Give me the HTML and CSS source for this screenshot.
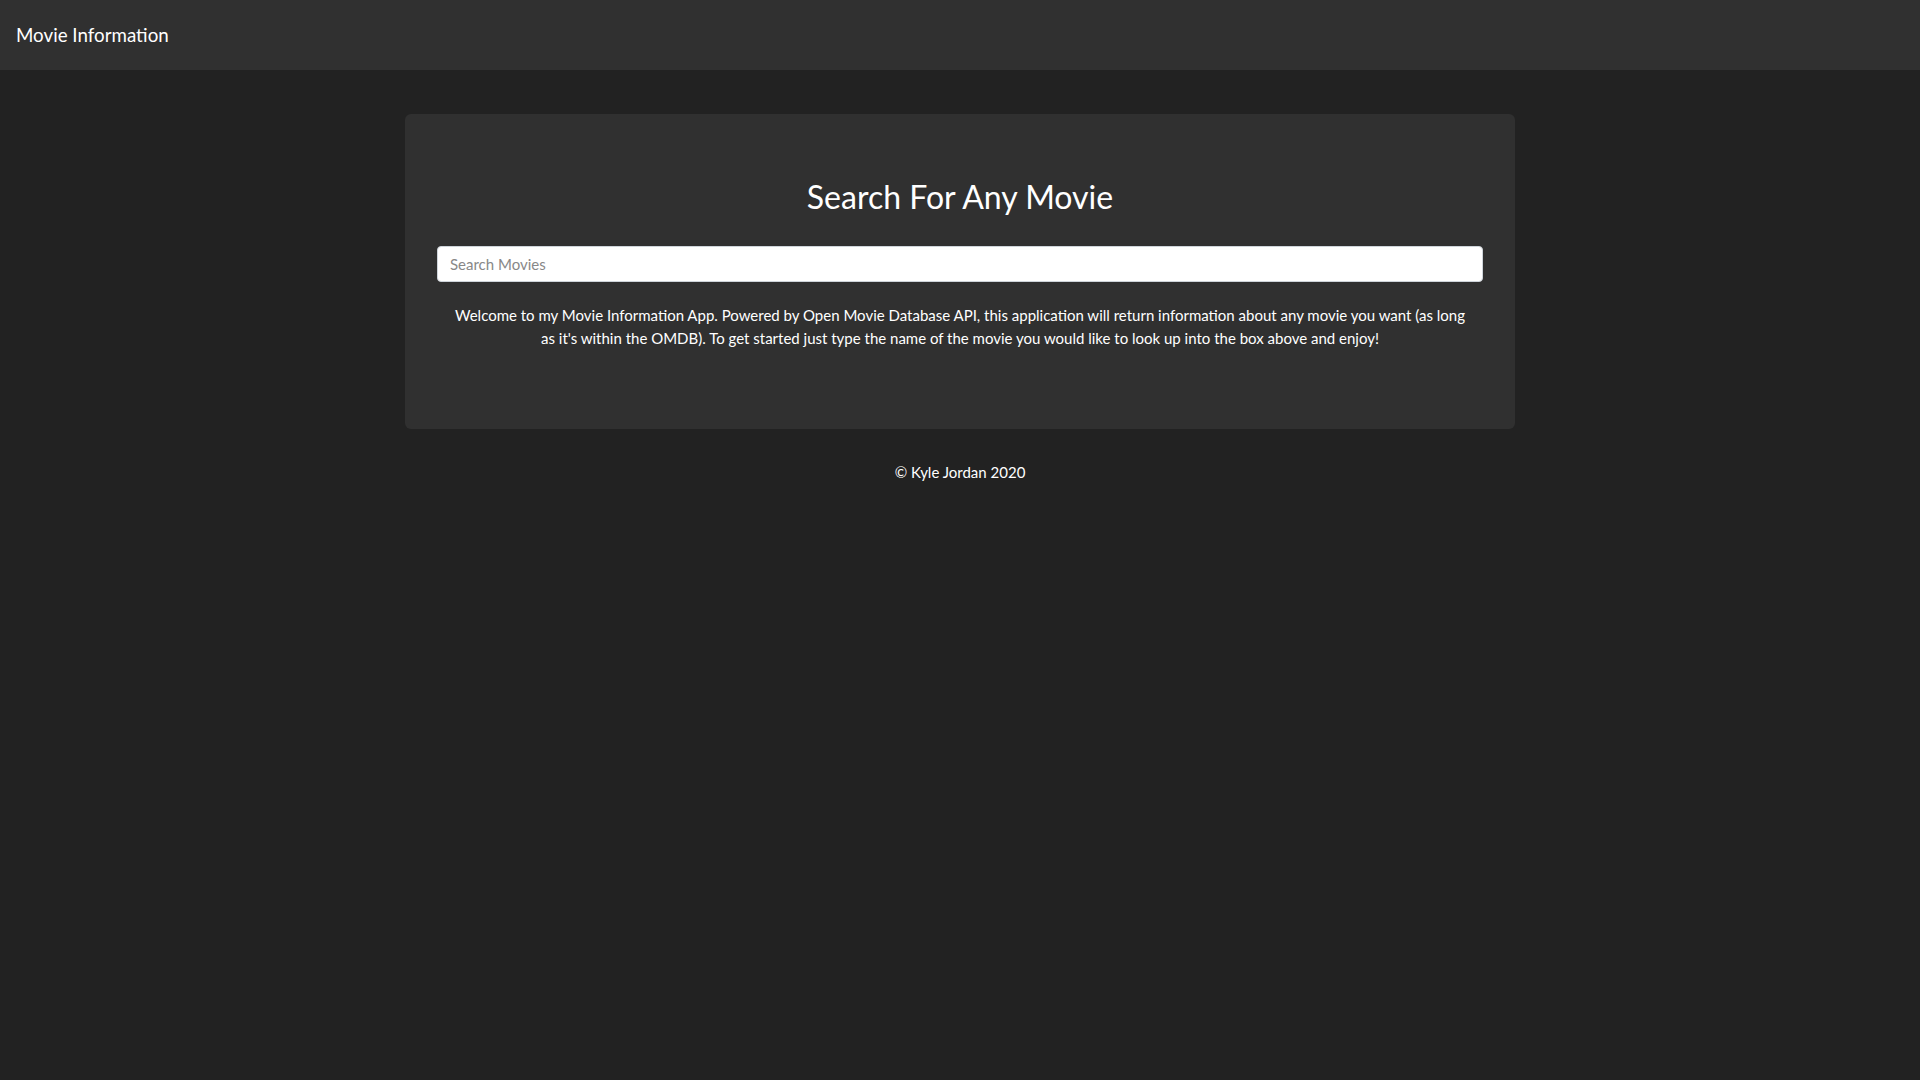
FILE: index.html
```html
<!DOCTYPE html>
<html lang="en">
<head>
<meta charset="utf-8">
<title>Movie Information</title>
<link rel="stylesheet" href="styles.css">
</head>
<body>
<nav class="navbar">
  <a class="brand" href="#">Movie Information</a>
</nav>
<main class="container">
  <section class="jumbotron">
    <h3 class="title">Search For Any Movie</h3>
    <form class="search-form">
      <input class="search-input" type="text" placeholder="Search Movies">
    </form>
    <p class="intro">Welcome to my Movie Information App. Powered by Open Movie Database API, this application will return information about any movie you want (as long as it's within the OMDB). To get started just type the name of the movie you would like to look up into the box above and enjoy!</p>
  </section>
  <footer class="footer">© Kyle Jordan 2020</footer>
</main>
</body>
</html>
```
FILE: styles.css
```css
* { box-sizing: border-box; }
html, body { margin: 0; padding: 0; }
body {
  background: #222222;
  color: #ffffff;
  font-family: Lato, "Noto Sans", sans-serif;
  font-size: 15px;
  line-height: 1.5;
  min-height: 1080px;
}
.navbar {
  height: 70px;
  background: #303030;
  display: flex;
  align-items: center;
  padding: 0 16px;
}
.brand {
  color: #ffffff;
  text-decoration: none;
  font-size: 18.75px;
  line-height: 1.5;
}
.container {
  width: 1140px;
  margin: 0 auto;
  padding: 44px 15px 0;
}
.jumbotron {
  background: #303030;
  border-radius: 6px;
  padding: 64px 32px 64px;
}
.title {
  margin: 0 0 30px;
  font-size: 32px;
  font-weight: 400;
  line-height: 1.2;
  text-align: center;
}
.search-form { margin: 0 0 22px; }
.search-input {
  display: block;
  width: 100%;
  height: 36px;
  padding: 6px 12px;
  font-family: Lato, "Noto Sans", sans-serif;
  font-size: 15px;
  line-height: 1.5;
  color: #444;
  background: #ffffff;
  border: 1px solid #ced4da;
  border-radius: 4px;
  outline: none;
}
.search-input::placeholder { color: #888888; opacity: 1; }
.intro {
  margin: 0 0 16px;
  padding: 0 12px;
  text-align: center;
}
.footer {
  margin-top: 32px;
  text-align: center;
}
```
